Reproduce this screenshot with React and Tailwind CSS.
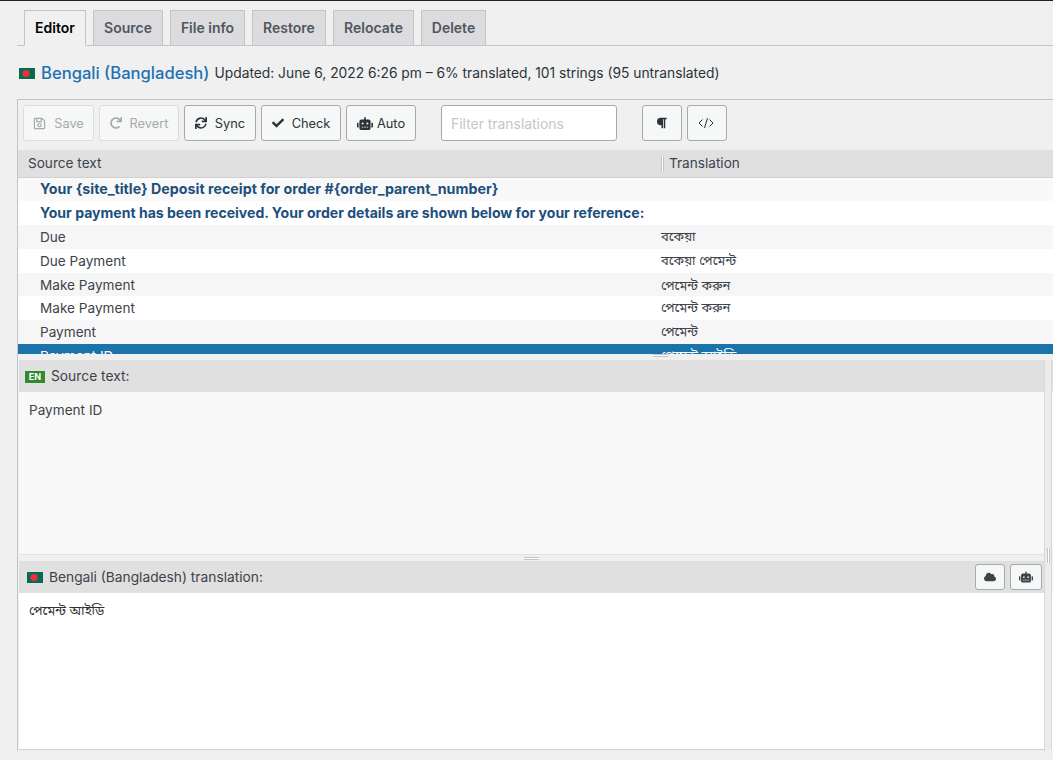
import React from "react";
import { FaRegSave, FaRedo, FaSync, FaCheck, FaRobot, FaParagraph, FaCloud } from "react-icons/fa";

const Flag = ({ className = "" }) => (
  <svg viewBox="0 0 16 11" className={`w-4 h-[11px] shrink-0 ${className}`}>
    <rect width="16" height="11" fill="#0a6a4f" />
    <circle cx="7" cy="5.5" r="3.6" fill="#ee2e3c" />
  </svg>
);

const tabs = [
  ["Editor", "w-[62px]"],
  ["Source", "w-[70px]"],
  ["File info", "w-[75px]"],
  ["Restore", "w-[74px]"],
  ["Relocate", "w-[81px]"],
  ["Delete", "w-[65px]"],
];

const Tabs = () => (
  <div className="h-[36px] ml-[17px] pl-[7px] flex gap-[7px] border-b border-[#c3c4c7]">
    {tabs.map(([t, w], i) => (
      <div
        key={t}
        className={`${w} h-[36px] pb-[2px] flex items-center justify-center text-[14px] font-semibold border border-[#c3c4c7] ${
          i === 0 ? "bg-[#f0f0f1] text-[#000] border-b-[#f0f0f1]" : "bg-[#dcdcde] text-[#50575e]"
        }`}
      >
        {t}
      </div>
    ))}
  </div>
);

const Btn = ({ w, icon, label, disabled, gap = "gap-[8px]", extra = "" }) => (
  <div
    className={`${w} h-9 flex items-center justify-center ${gap} ${extra} rounded-[3px] border text-[12.8px] bg-[#f6f7f7] ${
      disabled ? "border-[#dcdcde] text-[#a7aaad]" : "border-[#a7aaad] text-[#2c3338]"
    }`}
  >
    {icon}
    {label && <span className="pt-[2px]">{label}</span>}
  </div>
);

const rows = [
  ["Your {site_title} Deposit receipt for order #{order_parent_number}", "", "bg-[#f9f9f9] h-[23px] pb-[2px] text-[14.25px] font-bold text-[#1d4f7c]"],
  ["Your payment has been received. Your order details are shown below for your reference:", "", "bg-white h-6 text-[14.05px] font-bold text-[#1d4f7c]"],
  ["Due", "বকেয়া", "bg-[#f6f6f6] h-6 text-[13.6px] text-[#3c434a]"],
  ["Due Payment", "বকেয়া পেমেন্ট", "bg-white h-6 text-[13.6px] text-[#3c434a]"],
  ["Make Payment", "পেমেন্ট করুন", "bg-[#f6f6f6] h-[23px] pt-[2px] text-[13.6px] text-[#3c434a]"],
  ["Make Payment", "পেমেন্ট করুন", "bg-white h-6 text-[13.6px] text-[#3c434a]"],
  ["Payment", "পেমেন্ট", "bg-[#f6f6f6] h-6 text-[13.6px] text-[#3c434a]"],
];

const Row = ({ src, tr, cls }) => (
  <div className={`${cls} flex items-center`}>
    <div className="w-[643px] pl-[22px] shrink-0 whitespace-nowrap">{src}</div>
    <div className="text-[13px]">{tr}</div>
  </div>
);

const Grip = () => (
  <div className="w-[15px] h-[3px] border-y border-[#c3c4c7] bg-white" />
);

export default function App() {
  return (
    <div
      className="w-[1053px] h-[760px] overflow-hidden bg-[#f0f0f1] border-t border-[#1d2327] text-[#3c434a]"
      style={{ fontFamily: 'Inter, "Noto Sans Bengali", "Noto Sans", sans-serif' }}
    >
      <div className="h-[9px]" />
      <Tabs />
      <div className="h-[53px] ml-[19px] pt-[1px] flex items-center">
        <Flag />
        <span className="ml-[6px] text-[16.6px] font-medium text-[#2271b1]">Bengali (Bangladesh)</span>
        <span className="ml-[5px] text-[13.8px] text-[#2c3338]">
          Updated: June 6, 2022 6:26 pm – 6% translated, 101 strings (95 untranslated)
        </span>
      </div>

      <div className="ml-[17px] h-[652px] border-t border-l border-[#c3c4c7] flex flex-col">
        {/* toolbar */}
        <div className="h-[50px] shrink-0 flex items-start pl-[5px] pt-[5px]">
          <div className="flex gap-[5px]">
            <Btn w="w-[71px]" disabled icon={<FaRegSave className="w-[13px] h-[13px]" />} label="Save" />
            <Btn w="w-[80px]" disabled icon={<FaRedo className="w-3 h-3" />} label="Revert" />
            <Btn w="w-[72px]" icon={<FaSync className="w-3 h-3" />} label="Sync" />
            <Btn w="w-[80px]" icon={<FaCheck className="w-3 h-3" />} label="Check" />
            <Btn w="w-[70px]" gap="gap-[4px]" icon={<FaRobot className="w-4 h-[13px]" />} label="Auto" />
          </div>
          <div className="ml-[25px] w-[176px] h-9 bg-white border border-[#a7aaad] rounded-[3px] flex items-center pl-[9px] pt-[2px] text-[13.9px] text-[#c4c6c9]">
            Filter translations
          </div>
          <div className="ml-[25px] flex gap-[5px]">
            <Btn w="w-10" extra="pr-[2px]" icon={<FaParagraph className="w-[11px] h-3" />} />
            <Btn
              w="w-10"
              extra="pr-[3px]"
              icon={
                <svg viewBox="0 0 16 12" className="w-4 h-3" fill="none" stroke="currentColor" strokeWidth="1">
                  <path d="M4.5 2.5 1 6l3.5 3.5M11.5 2.5 15 6l-3.5 3.5M9.5 1 6.5 11" />
                </svg>
              }
            />
          </div>
        </div>

        {/* list */}
        <div className="h-[204px] shrink-0 overflow-hidden relative">
          <div className="h-[28px] bg-[#e0e0e0] border-b border-[#d0d0d0] flex items-center text-[13.6px] text-[#3c434a]">
            <div className="w-[643px] pl-[10px] shrink-0">Source text</div>
            <div className="w-[3px] h-[15px] border-x border-[#c3c4c7] bg-white" />
            <div className="ml-[5px]">Translation</div>
          </div>
          {rows.map(([s, t, c], i) => (
            <Row key={i} src={s} tr={t} cls={c} />
          ))}
          <div className="h-6 bg-[#1a73aa] text-white flex items-center text-[13.6px]">
            <div className="w-[643px] pl-[22px] shrink-0">Payment ID</div>
            <div className="text-[13px]">পেমেন্ট আইডি</div>
          </div>
        </div>

        {/* splitter */}
        <div className="h-[6px] shrink-0 flex justify-center relative">
          <div className="absolute left-[635px] top-0"><Grip /></div>
        </div>

        <div className="flex flex-1 min-h-0">
          <div className="w-[1026px] ml-px shrink-0 flex flex-col border-r border-[#d8d8d8]">
            <div className="h-[31px] shrink-0 bg-[#e0e0e0] flex items-center pl-[6px] pt-[2px] text-[13.8px]">
              <span className="w-5 h-[12px] bg-[#2e8b2e] text-white text-[9px] font-bold flex items-center justify-center">EN</span>
              <span className="ml-[6px]">Source text:</span>
            </div>
            <div className="h-[164px] shrink-0 bg-[#f8f8f8] border-t border-b border-[#e2e2e2] pl-[10px] pt-[9px] text-[13.6px] leading-[18px]">
              Payment ID
            </div>
            <div className="h-[6px] shrink-0 flex justify-center items-center">
              <Grip />
            </div>
            <div className="h-[32px] shrink-0 bg-[#e0e0e0] flex items-center pl-2 pr-[2px] text-[13.75px]">
              <Flag />
              <span className="ml-[6px]">Bengali (Bangladesh) translation:</span>
              <div className="ml-auto flex gap-[5px]">
                <div className="w-[30px] h-[26px] bg-[#f6f7f7] border border-[#a7aaad] rounded-[3px] flex items-center justify-center">
                  <FaCloud className="w-3 h-3" />
                </div>
                <div className="w-[32px] h-[26px] bg-[#f6f7f7] border border-[#a7aaad] rounded-[3px] flex items-center justify-center">
                  <FaRobot className="w-[14px] h-3" />
                </div>
              </div>
            </div>
            <div className="h-[157px] shrink-0 bg-white border-b border-[#d0d0d0] pl-[10px] pt-[8px] text-[13px] leading-[18px] text-[#2c3338]">
              পেমেন্ট আইডি
            </div>
          </div>
          {/* vertical splitter */}
          <div className="w-[6px] h-[390px] shrink-0 bg-[#ececec] flex flex-col items-center">
            <div className="h-[188px] shrink-0" />
            <div className="w-[3px] h-[15px] border-x border-[#c3c4c7] bg-white" />
          </div>
          <div className="flex-1 flex flex-col border-l border-[#d8d8d8] h-[390px]">
            <div className="h-[31px] shrink-0 bg-[#e0e0e0]" />
            <div className="h-[164px] shrink-0 bg-[#f8f8f8]" />
            <div className="h-[6px] shrink-0" />
            <div className="h-[32px] shrink-0 bg-[#f4f4f4]" />
            <div className="flex-1 bg-white" />
          </div>
        </div>
      </div>
    </div>
  );
}
